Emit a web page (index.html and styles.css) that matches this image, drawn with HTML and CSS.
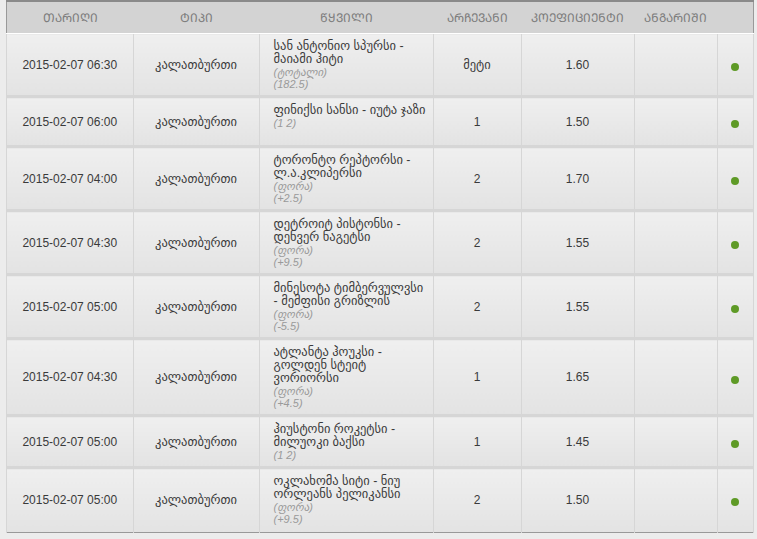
FILE: index.html
```html
<!DOCTYPE html>
<html lang="ka">
<head>
    <meta charset="UTF-8">
    <title>ფსონები</title>
    <link rel="stylesheet" href="styles.css">
</head>
<body>
    <div class="wrap">
        <table class="bets">
            <thead>
                <tr>
                    <th class="c-date">ᲗᲐᲠᲘᲦᲘ</th>
                    <th class="c-type">ᲢᲘᲞᲘ</th>
                    <th class="c-match">ᲬᲧᲕᲘᲚᲘ</th>
                    <th class="c-pick">ᲐᲠᲩᲔᲕᲐᲜᲘ</th>
                    <th class="c-odds">ᲙᲝᲔᲤᲘᲪᲘᲔᲜᲢᲘ</th>
                    <th class="c-score">ᲐᲜᲒᲐᲠᲘᲨᲘ</th>
                    <th class="c-state"></th>
                </tr>
            </thead>
            <tbody>
                <tr>
                    <td class="num">2015-02-07 06:30</td>
                    <td>კალათბურთი</td>
                    <td class="match">სან ანტონიო სპურსი - მაიამი ჰიტი<em>(ტოტალი)</em><em>(182.5)</em></td>
                    <td>მეტი</td>
                    <td class="num">1.60</td>
                    <td></td>
                    <td><span class="dot"></span></td>
                </tr>
                <tr>
                    <td class="num">2015-02-07 06:00</td>
                    <td>კალათბურთი</td>
                    <td class="match">ფინიქსი სანსი - იუტა ჯაზი<em>(1 2)</em></td>
                    <td class="num">1</td>
                    <td class="num">1.50</td>
                    <td></td>
                    <td><span class="dot"></span></td>
                </tr>
                <tr>
                    <td class="num">2015-02-07 04:00</td>
                    <td>კალათბურთი</td>
                    <td class="match">ტორონტო რეპტორსი - ლ.ა.კლიპერსი<em>(ფორა)</em><em>(+2.5)</em></td>
                    <td class="num">2</td>
                    <td class="num">1.70</td>
                    <td></td>
                    <td><span class="dot"></span></td>
                </tr>
                <tr>
                    <td class="num">2015-02-07 04:30</td>
                    <td>კალათბურთი</td>
                    <td class="match">დეტროიტ პისტონსი - დენვერ ნაგეტსი<em>(ფორა)</em><em>(+9.5)</em></td>
                    <td class="num">2</td>
                    <td class="num">1.55</td>
                    <td></td>
                    <td><span class="dot"></span></td>
                </tr>
                <tr>
                    <td class="num">2015-02-07 05:00</td>
                    <td>კალათბურთი</td>
                    <td class="match">მინესოტა ტიმბერვულვსი - მემფისი გრიზლის<em>(ფორა)</em><em>(-5.5)</em></td>
                    <td class="num">2</td>
                    <td class="num">1.55</td>
                    <td></td>
                    <td><span class="dot"></span></td>
                </tr>
                <tr>
                    <td class="num">2015-02-07 04:30</td>
                    <td>კალათბურთი</td>
                    <td class="match">ატლანტა ჰოუკსი - გოლდენ სტეიტ ვორიორსი<em>(ფორა)</em><em>(+4.5)</em></td>
                    <td class="num">1</td>
                    <td class="num">1.65</td>
                    <td></td>
                    <td><span class="dot"></span></td>
                </tr>
                <tr>
                    <td class="num">2015-02-07 05:00</td>
                    <td>კალათბურთი</td>
                    <td class="match">ჰიუსტონი როკეტსი - მილუოკი ბაქსი<em>(1 2)</em></td>
                    <td class="num">1</td>
                    <td class="num">1.45</td>
                    <td></td>
                    <td><span class="dot"></span></td>
                </tr>
                <tr>
                    <td class="num">2015-02-07 05:00</td>
                    <td>კალათბურთი</td>
                    <td class="match">ოკლახომა სიტი - ნიუ ორლეანს პელიკანსი<em>(ფორა)</em><em>(+9.5)</em></td>
                    <td class="num">2</td>
                    <td class="num">1.50</td>
                    <td></td>
                    <td><span class="dot"></span></td>
                </tr>
            </tbody>
        </table>
    </div>
</body>
</html>
```

FILE: styles.css
```css
body {
    margin: 0;
    background-color: #ececec;
    font-family: "Liberation Sans", "DejaVu Sans", sans-serif;
    font-size: 12px;
    color: #3a3a3a;
}

.wrap {
    padding: 0 3px 6px 6px;
}

.bets {
    width: 748px;
    border-collapse: collapse;
    table-layout: fixed;
    border: 1px solid #999;
    border-top: 2px solid #8a8a8a;
}

.c-date { width: 126px; }
.c-type { width: 126px; }
.c-match { width: 174px; }
.c-pick { width: 88px; }
.c-odds { width: 113px; }
.c-score { width: 83px; }
.c-state { width: 36px; }

.bets th {
    height: 31px;
    background-color: #d3d3d3;
    color: #7c7c7c;
    font-weight: normal;
    border-bottom: 1px solid #fff;
    padding: 0;
}

.bets td {
    height: 36px;
    padding: 6px 4px 5px;
    text-align: center;
    font-size: 12.5px;
    line-height: 13px;
    background: linear-gradient(#efefef, #e3e3e3);
    border-left: 1px solid #d6d6d6;
    border-right: 1px solid #d6d6d6;
    border-top: 1px solid #fafafa;
    border-bottom: 3px solid #d6d6d6;
}

.bets td.num {
    font-size: 12px;
}

.bets tbody tr:last-child td {
    border-bottom: none;
    padding-bottom: 7px;
}

.bets td.match {
    text-align: left;
    padding-left: 14px;
    padding-right: 4px;
    vertical-align: top;
}

.match em {
    display: block;
    color: #9a9a9a;
    font-size: 11px;
    line-height: 12px;
}

.dot {
    display: inline-block;
    width: 8px;
    height: 8px;
    margin-top: 4px;
    border-radius: 50%;
    background-color: #5e9a26;
    vertical-align: middle;
}
```
